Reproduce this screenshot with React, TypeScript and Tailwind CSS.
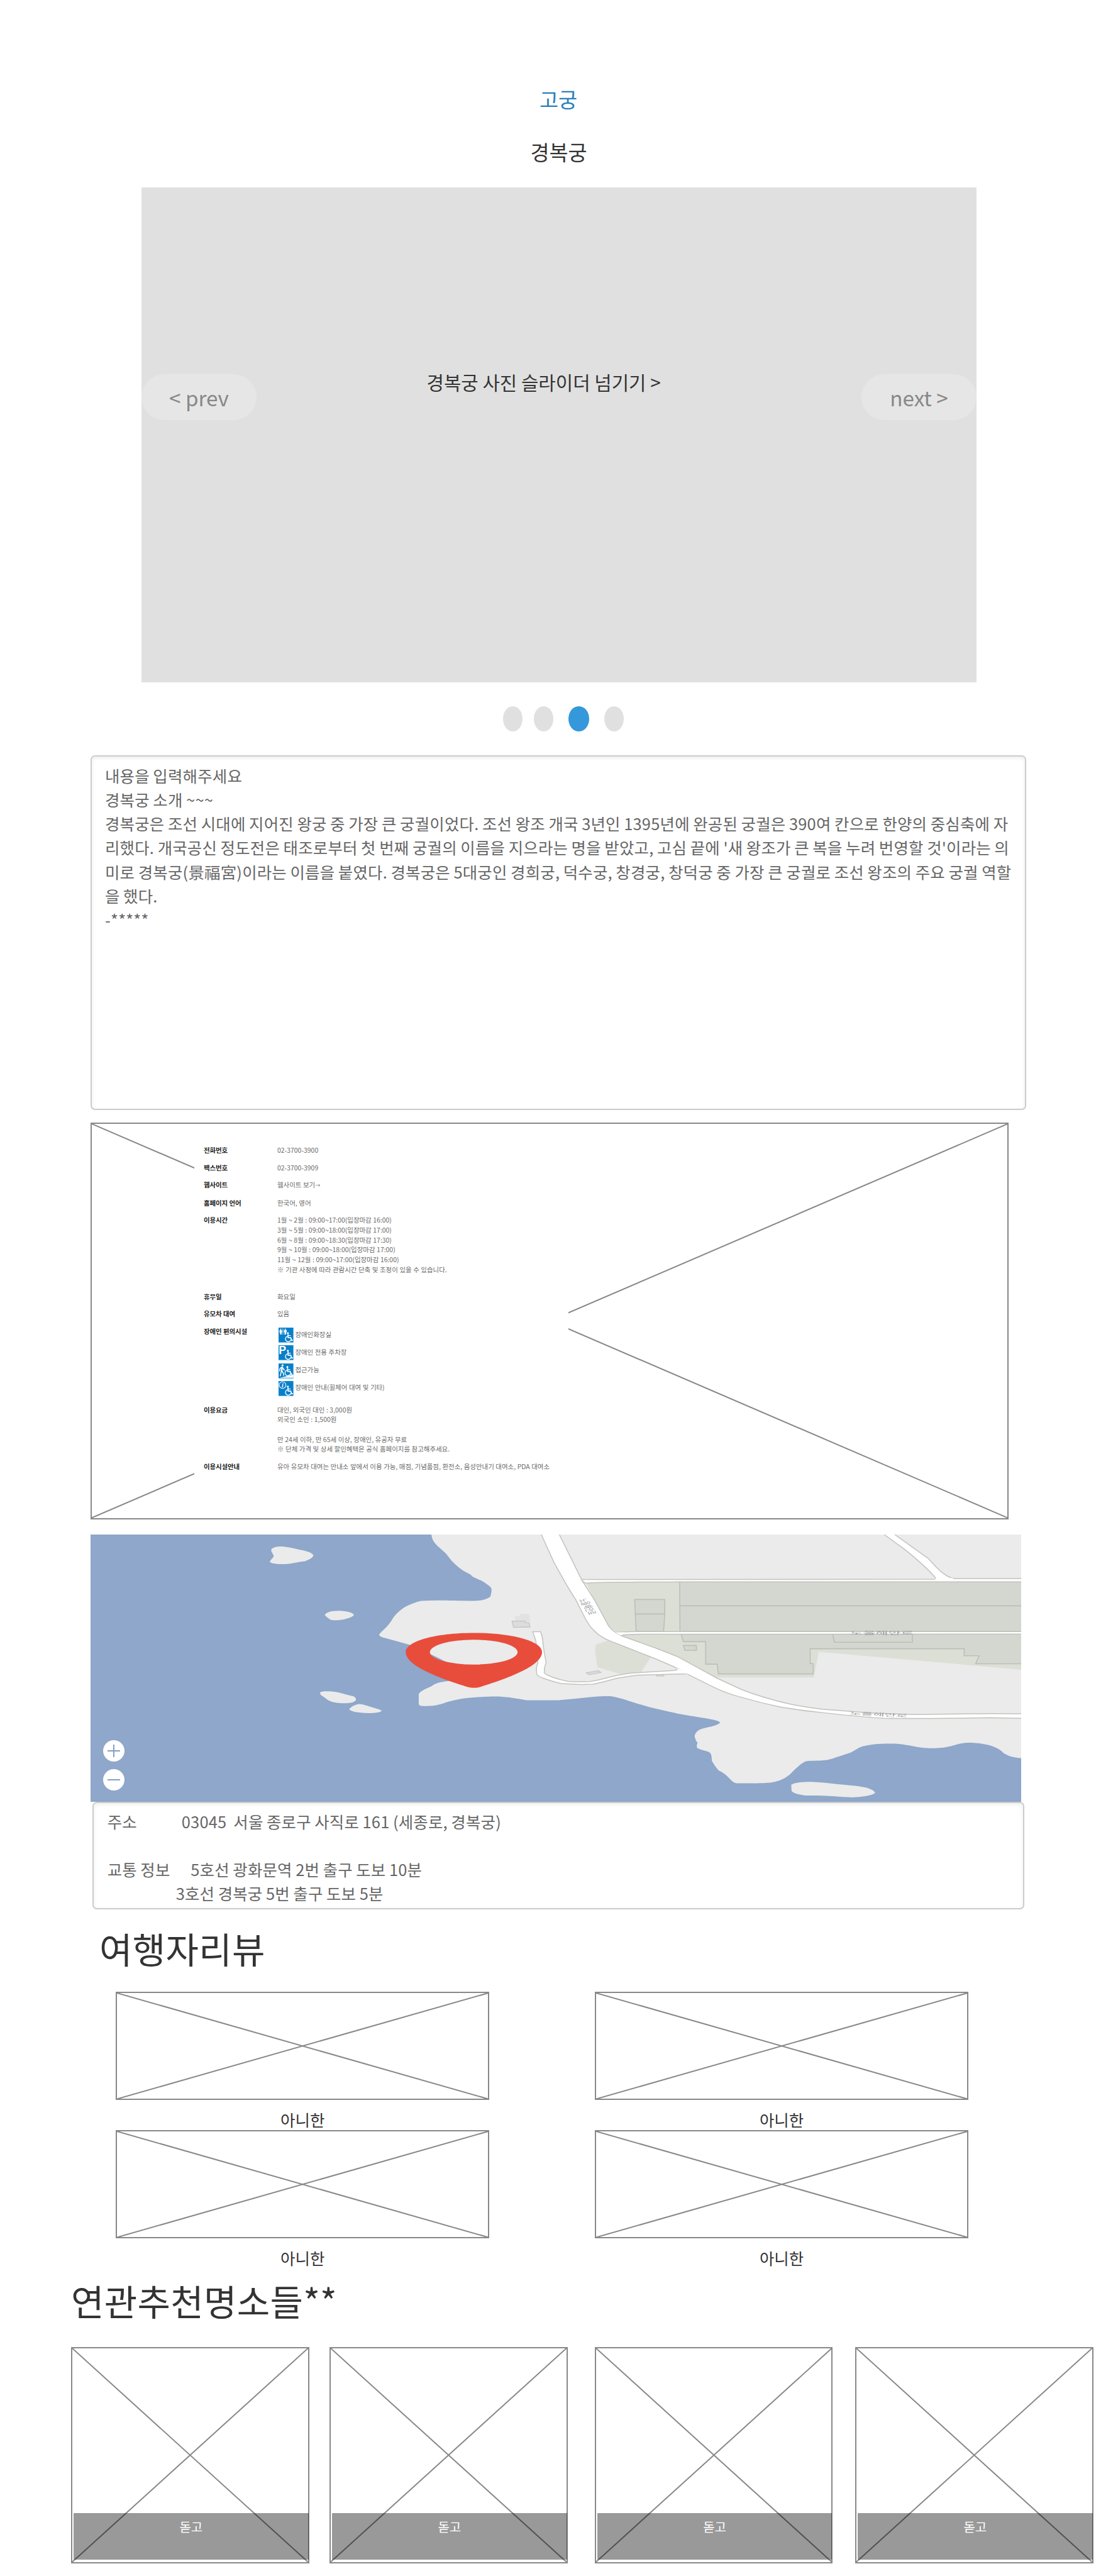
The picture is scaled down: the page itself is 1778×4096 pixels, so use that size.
import React from "react";

function Cross() {
  return (
    <svg className="absolute inset-0 h-full w-full" viewBox="0 0 100 100" preserveAspectRatio="none">
      <g stroke="#888888" strokeWidth="2">
        <line x1="0" y1="0" x2="100" y2="100" vectorEffect="non-scaling-stroke" />
        <line x1="100" y1="0" x2="0" y2="100" vectorEffect="non-scaling-stroke" />
      </g>
    </svg>
  );
}

function Wheelchair() {
  return (
    <g>
      <circle cx="16.3" cy="9.6" r="1.7" fill="#fff" />
      <g fill="none" stroke="#fff" strokeLinecap="round" strokeLinejoin="round">
        <path strokeWidth="1.9" d="M16.6 12v5.4h4.6l2 5.2 1.2-.5" />
        <path strokeWidth="1.3" d="M16.6 14h4.2" />
        <path strokeWidth="1.5" d="M15 15.4a4.9 4.9 0 1 0 6.6 6.2" />
      </g>
    </g>
  );
}

function FacilityIcon({ kind }: { kind: string }) {
  return (
    <svg className="h-[23.6px] w-[23.6px] shrink-0 overflow-visible" viewBox="0 0 26 26">
      <rect width="26" height="26" fill="#0780cb" />
      {kind !== "slope" && <Wheelchair />}
      {kind === "toilet" && (
        <g fill="#fff">
          <circle cx="3.9" cy="2.7" r="1.1" />
          <path d="M2 4.2h3.8l.6 4.3H5.2v3.7H2.7V8.5H1.4z" />
          <rect x="7.3" y="1.4" width="0.8" height="11" />
          <circle cx="11.8" cy="2.7" r="1.1" />
          <path d="M9.4 4.2h4.8v3.9h-1v4.1h-2.8V8.1h-1z" />
        </g>
      )}
      {kind === "parking" && (
        <text x="0.4" y="15.2" fill="#fff" fontSize="19.5" fontWeight="700" fontFamily="Liberation Sans, sans-serif">
          P
        </text>
      )}
      {kind === "slope" && (
        <g>
          <path d="M2 25.2 26 19.6v5.6z" fill="#fff" />
          <circle cx="7" cy="3.2" r="1.7" fill="#fff" />
          <g fill="none" stroke="#fff" strokeLinecap="round" strokeLinejoin="round">
            <path strokeWidth="2.6" d="M6.2 6.6 5.4 13" />
            <path strokeWidth="1.7" d="M5 13.6 3 21.6M6 13.4l2.4 3.4.6 4M4.8 6.8 2.4 9.2l-.4 4M7 7l3 4.6" />
          </g>
          <g transform="translate(-0.8 -3.4)">
            <Wheelchair />
          </g>
        </g>
      )}
      {kind === "info" && (
        <g>
          <circle cx="7" cy="7" r="5.9" fill="none" stroke="#fff" strokeWidth="1.2" />
          <text x="7" y="10.8" textAnchor="middle" fill="#fff" fontSize="11" fontStyle="italic" fontWeight="700" fontFamily="Liberation Serif, serif">
            i
          </text>
        </g>
      )}
    </svg>
  );
}

function InfoRow({ label, children }: { label: string; children: React.ReactNode }) {
  return (
    <div className="mb-[11.9px] flex">
      <div className="w-[117px] shrink-0 font-bold tracking-[-0.1px] text-[#222222]">{label}</div>
      <div className="whitespace-pre text-[#6a6a6a]">{children}</div>
    </div>
  );
}

const facilities = [
  { kind: "toilet", label: "장애인화장실" },
  { kind: "parking", label: "장애인 전용 주차장" },
  { kind: "slope", label: "접근가능" },
  { kind: "info", label: "장애인 안내(휠체어 대여 및 기타)" },
];

function InfoPanel() {
  return (
    <section className="relative ml-[144px] mt-[20.3px] h-[630.4px] w-[1460.4px] border-2 border-[#888888]">
      <Cross />
      <div className="relative ml-[163px] h-full w-[595px] bg-white pl-[15px] pt-[34px] text-[10.45px] leading-[15.65px] [word-spacing:0.25px]">
        <InfoRow label="전화번호">02-3700-3900</InfoRow>
        <InfoRow label="팩스번호">02-3700-3909</InfoRow>
        <InfoRow label="웹사이트">
          웹사이트 보기<span className="text-[8px]">→</span>
        </InfoRow>
        <InfoRow label="홈페이지 언어">한국어, 영어</InfoRow>
        <InfoRow label="이용시간">
          {"1월 ~ 2월 : 09:00~17:00(입장마감 16:00)\n3월 ~ 5월 : 09:00~18:00(입장마감 17:00)\n6월 ~ 8월 : 09:00~18:30(입장마감 17:30)\n9월 ~ 10월 : 09:00~18:00(입장마감 17:00)\n11월 ~ 12월 : 09:00~17:00(입장마감 16:00)\n※ 기관 사정에 따라 관람시간 단축 및 조정이 있을 수 있습니다.\n "}
        </InfoRow>
        <InfoRow label="휴무일">화요일</InfoRow>
        <InfoRow label="유모차 대여">있음</InfoRow>
        <InfoRow label="장애인 편의시설">
          {facilities.map((f) => (
            <div key={f.kind} className="flex h-[28.2px] items-center gap-[2.4px] pl-[2.4px]">
              <FacilityIcon kind={f.kind} />
              <span className="pb-[3px]">{f.label}</span>
            </div>
          ))}
        </InfoRow>
        <InfoRow label="이용요금">
          {"대인, 외국인 대인 : 3,000원\n외국인 소인 : 1,500원\n\n만 24세 이하, 만 65세 이상, 장애인, 유공자 무료\n※ 단체 가격 및 상세 할인혜택은 공식 홈페이지를 참고해주세요."}
        </InfoRow>
        <InfoRow label="이용시설안내">
          유아 유모차 대여는 안내소 앞에서 이용 가능, 매점, 기념품점, 환전소, 음성안내기 대여소, PDA 대여소
        </InfoRow>
      </div>
    </section>
  );
}

function MapDrawing() {
  return (
    <svg className="block h-full w-full" viewBox="33 42 3003 1403" preserveAspectRatio="none">
      <rect x="33" y="42" width="3003" height="1403" fill="#8ea7ca" />
      <g fill="#ebebeb">
        <path d="M1133 42C1135 75 1145 90 1158 110L1180 142C1195 175 1205 195 1230 225C1245 243 1262 250 1265 262C1280 275 1300 285 1312 303C1325 318 1327 322 1327 335C1326 350 1325 360 1323 368C1310 385 1290 389 1268 390C1200 390 1150 385 1100 390C1085 395 1065 408 1050 420C1030 440 1015 465 1008 483C1000 505 990 525 978 543C970 555 963 565 965 572C970 580 985 585 1000 592L1064 621C1100 645 1150 685 1181 710L1240 770L1198 810C1170 812 1150 820 1138 832C1130 845 1100 855 1092 878L1092 930C1093 940 1100 942 1115 942C1150 942 1165 930 1190 918C1230 900 1270 895 1320 892C1370 890 1390 898 1440 911L1543 911C1580 908 1640 893 1690 890L1710 890C1735 895 1760 910 1800 930C1850 955 1890 967 1930 982C1980 997 2010 1002 2045 1014C2060 1020 2064 1024 2064 1029C2060 1037 2050 1043 2035 1050C2010 1058 2000 1062 1990 1075C1982 1090 1981 1100 1984 1110C1986 1120 1988 1130 1992 1134C1989 1145 1989 1155 1990 1160C2000 1172 2020 1175 2030 1184C2038 1195 2037 1210 2038 1230C2045 1250 2052 1265 2060 1280C2075 1290 2085 1305 2100 1330C2108 1343 2113 1347 2125 1347L2160 1347C2210 1346 2230 1345 2250 1335C2268 1327 2280 1312 2288 1303C2300 1285 2315 1255 2336 1235C2350 1225 2380 1232 2410 1225C2440 1212 2470 1193 2486 1186C2500 1175 2510 1160 2524 1153C2560 1137 2600 1138 2630 1139C2680 1145 2700 1163 2750 1163C2810 1163 2820 1140 2860 1134C2900 1134 2930 1142 2955 1160C2970 1172 2975 1180 2978 1187C2990 1200 3005 1212 3036 1215L3036 42Z" />
        <path d="M617 118C625 105 640 103 660 106C690 112 705 122 720 125C745 135 752 145 752 152C750 165 740 172 725 182C705 185 690 192 675 195C650 199 625 198 612 187C610 178 622 168 624 155C622 140 613 130 617 118Z" />
        <path d="M789 462C797 450 805 443 830 442C860 442 875 450 883 462C880 475 865 482 845 489C825 493 812 493 806 487C798 479 790 470 789 462Z" />
        <path d="M774 870C780 863 800 863 830 869C850 877 865 885 880 890C890 897 890 905 889 912C880 927 860 927 845 927C820 925 805 918 797 908C790 897 775 885 774 878Z" />
        <path d="M868 957C875 945 885 935 900 931C915 932 930 943 945 950C960 957 972 962 972 967C965 976 950 978 930 979C905 978 875 973 868 960Z" />
        <path d="M2294 1355C2305 1342 2330 1339 2360 1339C2400 1342 2450 1353 2500 1360C2540 1367 2560 1380 2565 1397C2555 1410 2530 1417 2490 1421C2450 1418 2430 1411 2340 1411C2310 1405 2296 1395 2295 1385Z" />
      </g>
      <g transform="translate(1494 0)">
        <path fill="#dcdfd5" d="M136 290H1542V751L889 657L873 792H555L436 685L255 575L210 520L165 385Z" />
        <path fill="#dcdfd5" d="M210 597L170 619L167 650L174 737L250 774L314 768L348 683Z" />
        <g fill="#d4d7cf" stroke="#bcbfb8" strokeWidth="1.6">
          <path vectorEffect="non-scaling-stroke" d="M440 285H1550V551H441Z" />
          <path vectorEffect="non-scaling-stroke" d="M441 416H1550" />
          <path vectorEffect="non-scaling-stroke" d="M295 383H392V460L388 551H312L299 545Z" />
          <path vectorEffect="non-scaling-stroke" d="M295 459H392" />
          <path vectorEffect="non-scaling-stroke" d="M444 560L452 604H524V722H561L565 773H871V719H861V641H1358V678H1406L1395 720H1550V560Z" />
          <path vectorEffect="non-scaling-stroke" d="M933 560L939 607H1191V560" />
          <path vectorEffect="non-scaling-stroke" d="M452 624H494V650H457Z" />
        </g>
        <g fill="#dcdcdc" stroke="#c4c4c4" strokeWidth="1.3">
          <path stroke="none" fill="#e2e2e2" d="M-93 469H-75V459H-46L-42 497H-88Z" />
          <path vectorEffect="non-scaling-stroke" d="M-101 496H-58V504H-46L-43 527L-96 529Z" />
          <path vectorEffect="non-scaling-stroke" d="M139 767L178 756L186 766L148 777Z" />
          <path vectorEffect="non-scaling-stroke" d="M366 773H389V784H366Z" />
        </g>
        <g fill="#fff" stroke="#c2c2be" strokeWidth="1.5">
          <path vectorEffect="non-scaling-stroke" d="M-34 552H-9C-4 570 -2 580 -2 600L3 660L9 712L4 740L3 768C10 780 40 800 80 812C110 815 130 814 150 813C180 807 215 787 250 778C270 771 285 768 300 767L420 755C435 752 438 747 433 740L475 770L460 773L310 779C290 780 270 787 240 795C210 807 180 822 160 827L120 829L60 824C40 819 20 807 0 796C-20 783 -22 777 -22 765L-22 740L-18 718L-24 600Z" />
          <path vectorEffect="non-scaling-stroke" d="M1100 42L1170 125C1200 165 1250 235 1268 275L1322 272C1285 255 1260 195 1240 165L1134 42" />
          <path vectorEffect="non-scaling-stroke" d="M120 278L1268 276L1322 273L1550 273V290L440 290C300 292 160 291 136 297Z" />
          <path vectorEffect="non-scaling-stroke" d="M228 556C250 553 270 551 300 551H1550V564L320 565C280 566 262 566 245 572Z" />
          <path vectorEffect="non-scaling-stroke" d="M-9 30L0 65L35 190L80 320L105 385L130 465C140 500 150 525 165 548C180 572 195 588 215 600L270 635L345 683C380 707 410 725 433 745L470 778L540 835C570 860 600 880 640 896C670 910 700 925 760 945C800 957 860 969 900 976C960 987 1050 1002 1100 1006C1200 1010 1340 1005 1440 1003L1550 1006V982L1440 981C1340 983 1280 985 1200 986C1150 984 1100 981 1050 977C990 970 950 964 900 958C860 950 830 942 800 933C760 918 700 893 640 855L560 795L500 742L436 685C410 667 380 648 350 630L255 575C235 560 220 545 210 520L165 385L125 283L48 30Z" />
        </g>
        <path fill="#fff" d="M136 281H165V290L139 294L131 281Z M1269 270L1320 270L1330 284H1260Z M232 555L262 555V563L250 571Z M430 743L476 774L440 768Z" />
        <g fill="#a0a0a0" fontFamily="Noto Sans CJK KR, sans-serif" fontSize="23">
          <text x="990" y="565" textLength="205" lengthAdjust="spacingAndGlyphs">
            노을해안로
          </text>
          <text x="988" y="987" textLength="188" lengthAdjust="spacingAndGlyphs" transform="rotate(4.5 988 987)">
            노을해안로
          </text>
          <text x="0" y="0" textLength="88" lengthAdjust="spacingAndGlyphs" fontSize="34" transform="translate(115 384) rotate(68)">
            노을해안로
          </text>
        </g>
      </g>
      <path
        fill="#e84d3c"
        fillRule="evenodd"
        d="M1270 558C1395 558 1490 602 1490 658C1490 735 1370 800 1290 842C1277 848 1264 848 1250 842C1170 800 1050 735 1050 658C1050 602 1145 558 1270 558ZM1128 659A141.500 65 0 0 0 1411 659A141.500 65 0 0 0 1128 659Z"
      />
    </svg>
  );
}

function MapPanel() {
  return (
    <section className="relative ml-[143.500px] mt-[24px] h-[425.3px] w-[1480px]">
      <MapDrawing />
      <div className="absolute left-[20.500px] top-[327.200px] flex flex-col gap-[12px]">
        <button className="relative flex h-[34px] w-[34px] items-center justify-center rounded-full bg-white">
          <span className="h-[2px] w-[20px] bg-[#849fc6]" />
          <span className="absolute h-[20px] w-[2px] bg-[#849fc6]" />
        </button>
        <button className="flex h-[34px] w-[34px] items-center justify-center rounded-full bg-white">
          <span className="h-[2px] w-[20px] bg-[#849fc6]" />
        </button>
      </div>
    </section>
  );
}

function ReviewCard() {
  return (
    <div className="w-[594.4px]">
      <div className="relative h-[172.500px] border-2 border-[#888888]">
        <Cross />
      </div>
      <div className="mt-[14.6px] text-center text-[25.500px] leading-[32px] text-[#333333]">아니한</div>
    </div>
  );
}

function PlaceCard() {
  return (
    <div className="relative h-[343.600px] w-[378.700px] border-2 border-[#888888]">
      <Cross />
      <div className="absolute left-[2px] right-[-1px] top-[261.600px] h-[74.300px] bg-black/40 pt-[8px] text-center text-[20px] leading-[28px] text-white">
        돋고
      </div>
    </div>
  );
}

export default function App() {
  return (
    <main className="h-[4096px] w-[1778px] overflow-hidden bg-white font-['Noto_Sans_CJK_KR','Noto_Sans',sans-serif] text-[#333333]">
      <div className="pt-[131px] pr-[2px] text-center text-[32.700px] leading-[52px] text-[#2980b9]">고궁</div>
      <h1 className="mt-[31.600px] pr-[1px] text-center text-[32.700px] leading-[52px]">경복궁</h1>

      <section className="mx-auto mt-[31.400px] flex h-[787px] w-[1328px] items-start bg-[#e0e0e0] pt-[291px]">
        <button className="mt-[6.500px] h-[73px] w-[183px] rounded-[36.500px] bg-[#e6e6e6] text-[33.200px] text-[#888888]">
          &lt; prev
        </button>
        <p className="ml-[270.500px] text-[29.800px] leading-[36px]">경복궁 사진 슬라이더 넘기기 &gt;</p>
        <button className="ml-auto mt-[6.500px] h-[73px] w-[183px] rounded-[36.500px] bg-[#e6e6e6] text-[33.200px] text-[#888888]">
          next &gt;
        </button>
      </section>

      <div className="ml-[799.500px] mt-[38px] flex h-[40.500px]">
        <span className="w-[31.800px] rounded-[50%] bg-[#e0e0e0]" />
        <span className="ml-[18px] w-[31.200px] rounded-[50%] bg-[#e0e0e0]" />
        <span className="ml-[23.500px] w-[33px] rounded-[50%] bg-[#3498db]" />
        <span className="ml-[24px] w-[31.400px] rounded-[50%] bg-[#e0e0e0]" />
      </div>

      <section className="ml-[144px] mt-[37.700px] h-[563.700px] w-[1488.200px] whitespace-pre rounded-[7px] border-2 border-[#cccccc] pl-[21px] pt-[10.500px] text-[25.450px] leading-[38.250px] tracking-[0.21px] text-[#666666] shadow-[inset_0_2px_6px_rgba(0,0,0,0.08)] [word-spacing:-0.4px]">
        <p>내용을 입력해주세요</p>
        <p>경복궁 소개 ~~~</p>
        <p>경복궁은 조선 시대에 지어진 왕궁 중 가장 큰 궁궐이었다. 조선 왕조 개국 3년인 1395년에 완공된 궁궐은 390여 칸으로 한양의 중심축에 자</p>
        <p>리했다. 개국공신 정도전은 태조로부터 첫 번째 궁궐의 이름을 지으라는 명을 받았고, 고심 끝에 '새 왕조가 큰 복을 누려 번영할 것'이라는 의</p>
        <p>미로 경복궁(景福宮)이라는 이름을 붙였다. 경복궁은 5대궁인 경희궁, 덕수궁, 창경궁, 창덕궁 중 가장 큰 궁궐로 조선 왕조의 주요 궁궐 역할</p>
        <p>을 했다.</p>
        <p>-*****</p>
      </section>

      <InfoPanel />
      <MapPanel />

      <section className="ml-[147px] h-[170.900px] w-[1482.200px] whitespace-pre rounded-[7px] border-2 border-[#cccccc] pl-[21.700px] pt-[10px] text-[25.450px] leading-[38.200px] tracking-[0.21px] text-[#666666] shadow-[inset_0_2px_6px_rgba(0,0,0,0.08)] [word-spacing:-0.46px]">
        {"주소             03045  서울 종로구 사직로 161 (세종로, 경복궁)\n\n교통 정보      5호선 광화문역 2번 출구 도보 10분\n                    3호선 경복궁 5번 출구 도보 5분"}
      </section>

      <h2 className="ml-[158px] mt-[21.700px] text-[57px] leading-[80px] tracking-[0.3px]">여행자리뷰</h2>
      <div className="ml-[184px] mt-[29.300px] grid grid-cols-[594.400px_594.400px] gap-x-[167.500px] gap-y-[0.800px]">
        <ReviewCard />
        <ReviewCard />
        <ReviewCard />
        <ReviewCard />
      </div>

      <h2 className="ml-[113px] mt-[11.400px] text-[57px] leading-[80px] tracking-[0.3px]">연관추천명소들**</h2>
      <div className="ml-[113px] mt-[35px] flex">
        <PlaceCard />
        <div className="ml-[32.300px]">
          <PlaceCard />
        </div>
        <div className="ml-[43.100px]">
          <PlaceCard />
        </div>
        <div className="ml-[35.500px]">
          <PlaceCard />
        </div>
      </div>
    </main>
  );
}
